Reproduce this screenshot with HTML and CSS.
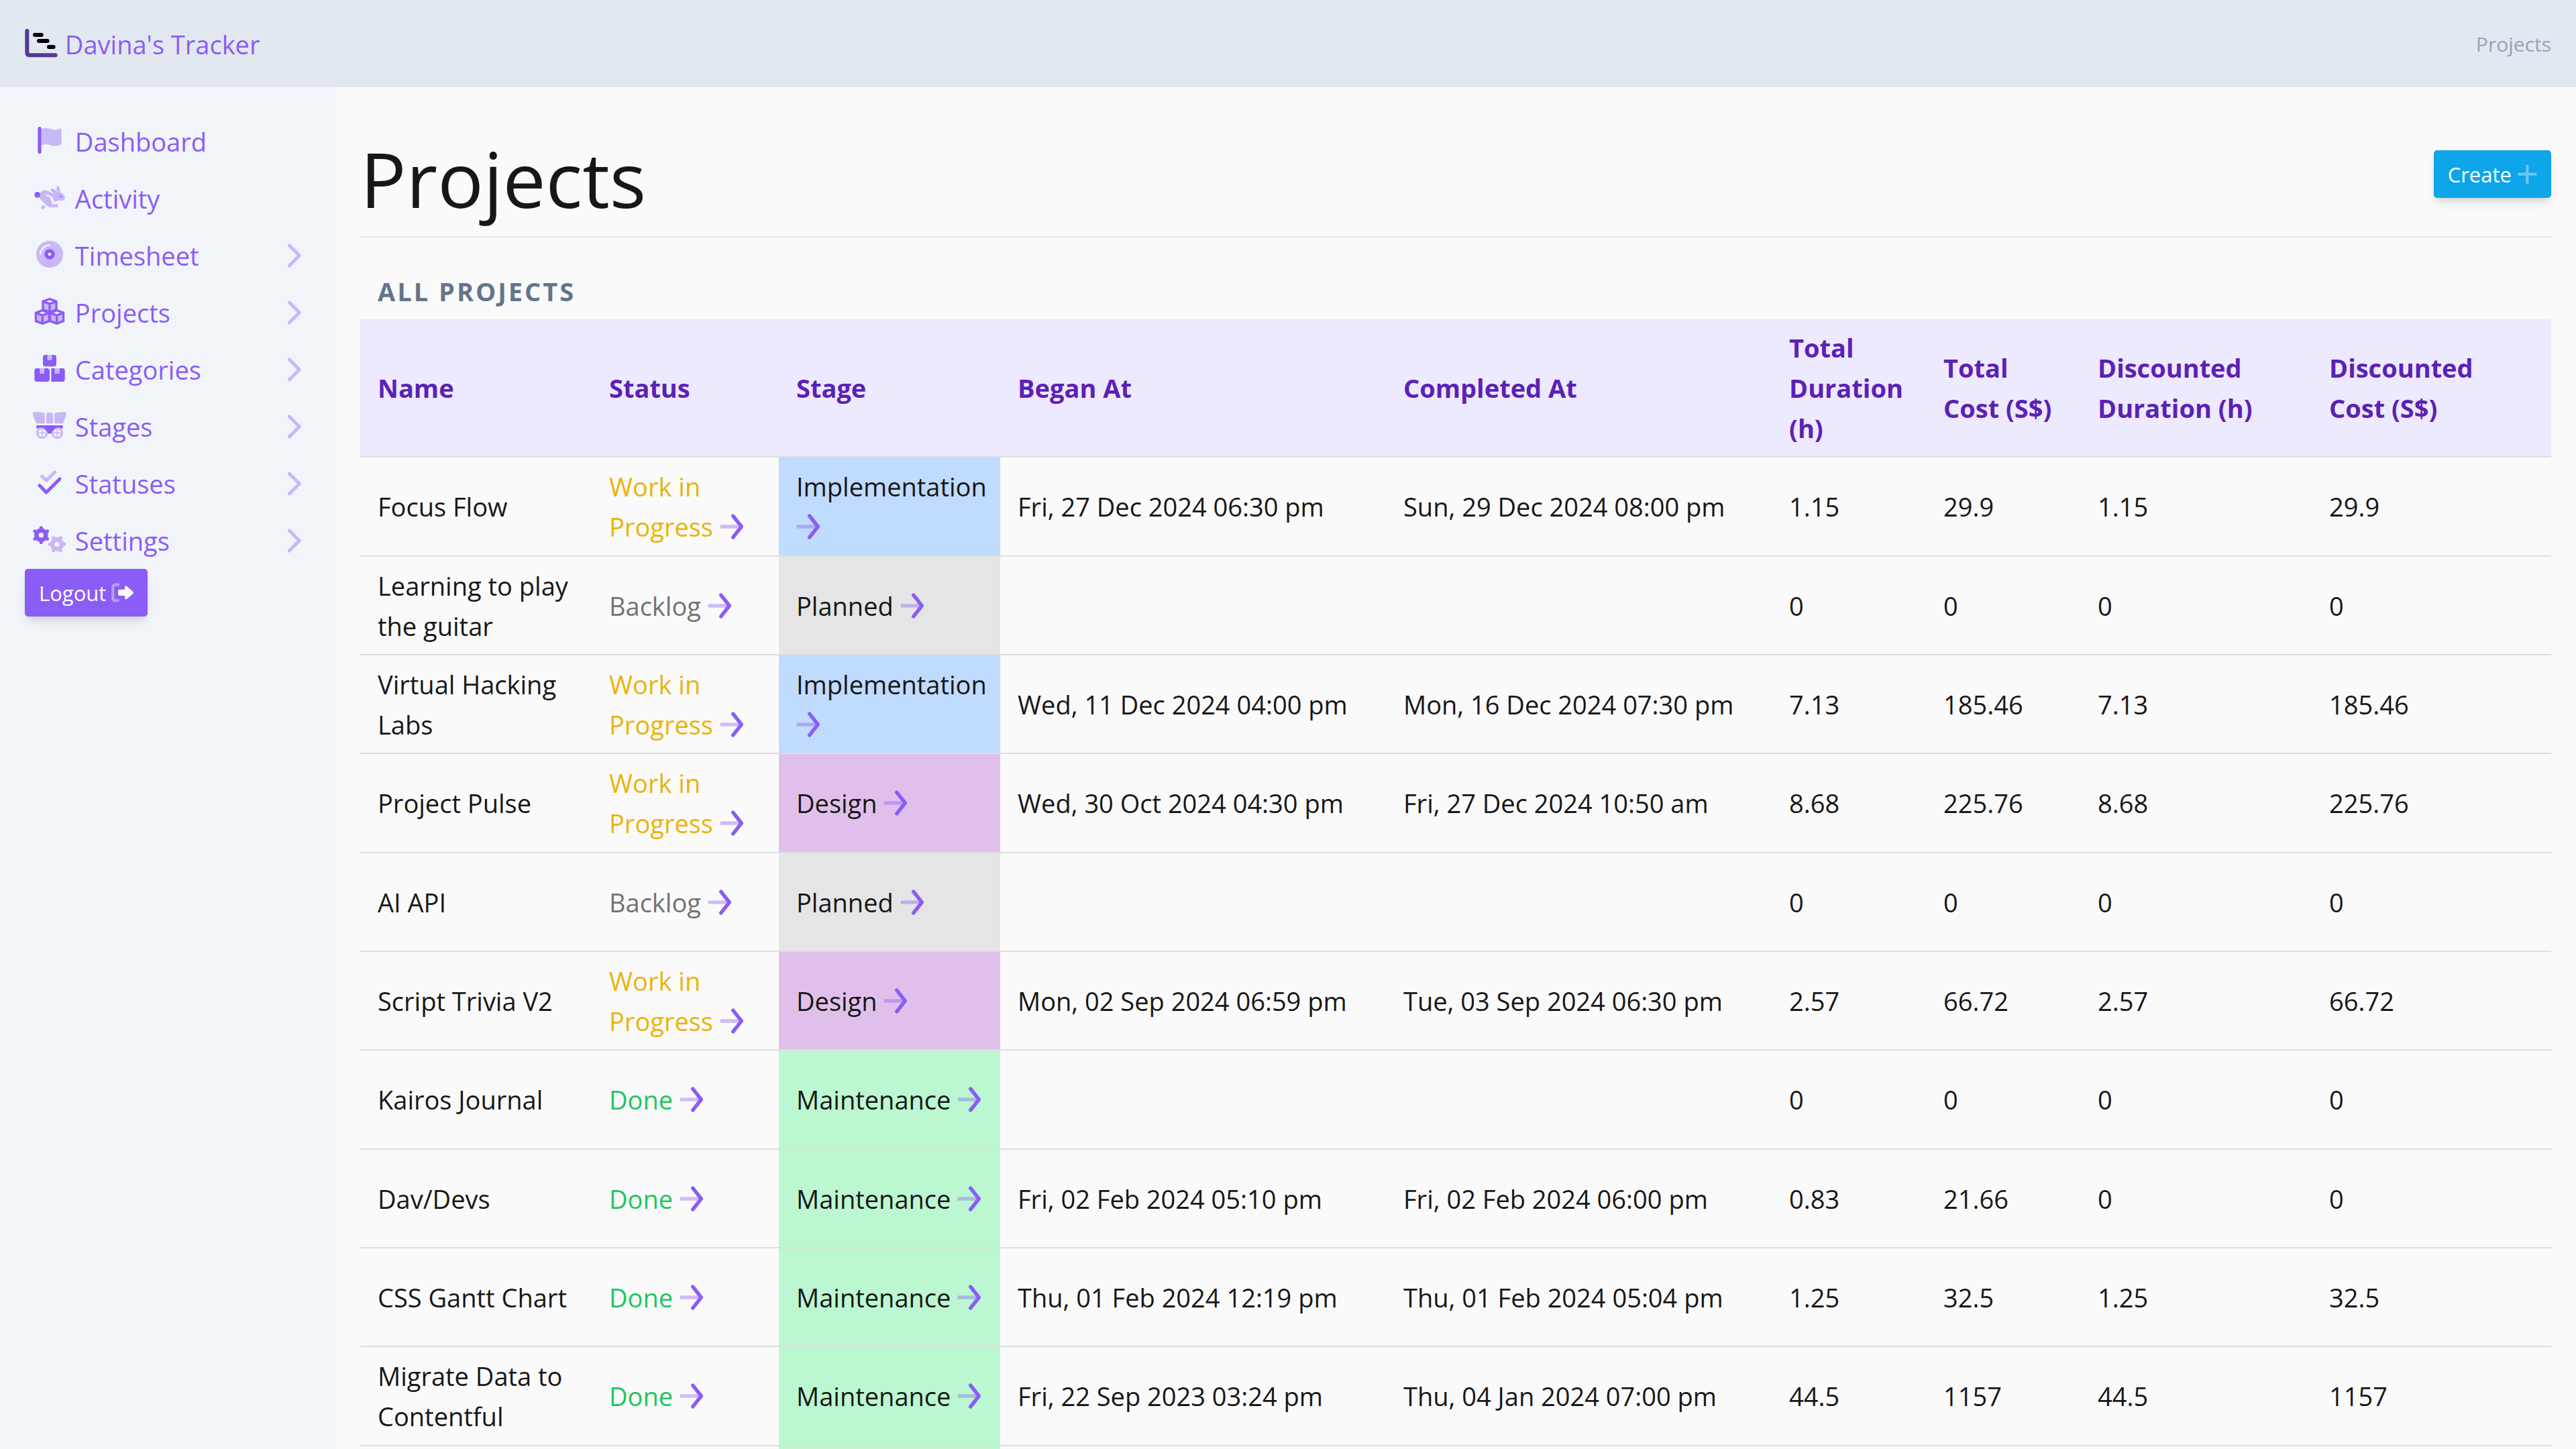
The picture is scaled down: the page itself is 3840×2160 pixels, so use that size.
FILE: index.html
```html
<!DOCTYPE html>
<html lang="en">
<head>
<meta charset="utf-8">
<title>Projects - Davina's Tracker</title>
<link rel="stylesheet" href="styles.css">
</head>
<body>
<svg class="sprite" aria-hidden="true">
  <symbol id="chevron" viewBox="0 0 75 120"><path class="line faded" stroke-width="15" d="M16 15 61 60 16 105"/></symbol>
  <symbol id="arrow" viewBox="0 0 105 120"><path class="line faded" stroke-width="16" stroke-linecap="butt" d="M2 60H86"/><path class="line" stroke-width="16" d="M59 12 97 60 59 108"/></symbol>
  <symbol id="cube" viewBox="-36 -36 72 74"><path class="fill faded" d="M-30-17 0-6V31L-30 20ZM30-17 0-6V31L30 20Z"/><path class="line" stroke-width="10" d="M0-28 30-17V20L0 31-30 20V-17ZM-30-17 0-6 30-17M0-6V31"/></symbol>
  <symbol id="gear" viewBox="-42 -42 84 84"><circle class="line" stroke-width="20" r="21"/><path class="line" stroke-width="15" d="M0-25V-33M0 25V33M22-13 28-17M-22-13-28-17M22 13 28 17M-22 13-28 17"/></symbol>
</svg>

<header class="topbar">
  <a class="brand" href="#"><svg class="logo" viewBox="0 0 150 129"><path class="logo-axis" d="M10 9V106Q10 118 22 118H137"/><path class="logo-bars" d="M45 27H74M63 54H101M108 81H128"/></svg> Davina's Tracker</a>
  <span class="crumb">Projects</span>
</header>

<div class="layout">
  <nav class="sidebar">
    <ul class="menu">
      <li><a href="#"><span><svg class="icon" viewBox="0 0 150 120"><path class="line" stroke-width="16" d="M30 8V112"/><path class="fill faded" d="M38 10C58 3 72 6 84 11C98 16 108 14 119 9Q128 7 128 15V73Q128 78 122 81C104 89 92 88 76 81C62 77 50 78 38 82Z"/></svg> Dashboard</span></a></li>
      <li><a href="#"><span><svg class="icon" viewBox="0 0 150 120"><circle class="fill" cx="20" cy="49" r="13"/><g class="faded"><path class="fill" d="M31 46C35 31 48 27 62 30C74 33 84 42 97 45C90 41 79 34 80 25C81 18 91 21 98 27C104 32 107 36 108 40C104 28 104 12 112 8C120 11 123 28 122 39C134 42 143 52 143 62C142 71 135 75 126 75H113L94 82C96 65 82 50 58 49C56 49 56 54 59 55C80 57 84 75 86 91H107C115 91 114 105 107 105H77C70 105 67 102 62 97L33 70C28 64 28 54 31 46Z"/><path class="fill" d="M46 94 58 104C52 108 46 114 40 113C33 111 36 102 46 94Z"/></g><circle class="fill" cx="124" cy="57" r="4"/></svg> Activity</span></a></li>
      <li><a href="#"><span><svg class="icon" viewBox="0 0 150 120"><circle class="fill faded" cx="75" cy="60" r="60"/><path class="line cut" stroke-width="7" d="M34 60A41 41 0 0 1 75 19"/><circle class="fill" cx="75" cy="60" r="23"/><circle class="hole" cx="75" cy="60" r="7"/></svg> Timesheet</span><svg class="chevron"><use href="#chevron"/></svg></a></li>
      <li><a href="#"><span><svg class="icon" viewBox="0 0 150 120"><use href="#cube" x="39" y="-3" width="72" height="74"/><use href="#cube" x="7" y="48" width="72" height="74"/><use href="#cube" x="71" y="48" width="72" height="74"/></svg> Projects</span><svg class="chevron"><use href="#chevron"/></svg></a></li>
      <li><a href="#"><span><svg class="icon" viewBox="0 0 150 120"><path class="fill" d="M56 0H65V24H85V0H94Q105 0 105 11V40Q105 52 94 52H56Q45 52 45 40V11Q45 0 56 0ZM18 60H31V84H51V60H64Q75 60 75 71V108Q75 120 64 120H18Q7 120 7 108V71Q7 60 18 60ZM82 60H98V84H120V60H132Q143 60 143 71V108Q143 120 132 120H82Z"/><path class="fill faded" d="M65 0H85V24H65ZM31 60H51V84H31ZM98 60H120V84H98Z"/></svg> Categories</span><svg class="chevron"><use href="#chevron"/></svg></a></li>
      <li><a href="#"><span><svg class="icon" viewBox="0 0 150 120"><path class="fill" d="M19 60H131Q135 60 135 67Q135 75 130 75Q110 62 92 80Q84 88 83 97H67Q66 88 58 80Q40 62 20 75Q15 75 15 67Q15 60 19 60Z"/><g class="faded"><path class="fill" d="M10 0 48 3Q53 4 53 9V52H15L0 13Q-1 0 10 0ZM66 4H84Q90 4 90 10V52H60V10Q60 4 66 4ZM140 0 102 3Q97 4 97 9V52H135L150 13Q151 0 140 0Z"/><path class="line" stroke-width="9" d="M19 94A22 22 0 1 0 63 94A22 22 0 1 0 19 94ZM87 94A22 22 0 1 0 131 94A22 22 0 1 0 87 94Z"/><path class="line" stroke-width="5" stroke-linecap="butt" d="M24 94H58M41 77V111M92 94H126M109 77V111"/></g></svg> Stages</span><svg class="chevron"><use href="#chevron"/></svg></a></li>
      <li><a href="#"><span><svg class="icon" viewBox="0 0 150 120"><path class="line faded" stroke-width="15" d="M41 33 60 52 98 15"/><path class="line" stroke-width="15" d="M30 74 60 105 120 45"/></svg> Statuses</span><svg class="chevron"><use href="#chevron"/></svg></a></li>
      <li><a href="#"><span><svg class="icon" viewBox="0 0 150 120"><use href="#gear" x="-5" y="-1" width="84" height="84"/><g class="faded" transform="rotate(30 108 82)"><use href="#gear" x="66" y="40" width="84" height="84"/></g></svg> Settings</span><svg class="chevron"><use href="#chevron"/></svg></a></li>
    </ul>
    <button class="btn btn-logout" type="button">Logout <svg class="btn-icon" viewBox="0 0 99 99"><path class="line faded" stroke-width="13" d="M31 13H20Q7 13 7 26V71Q7 85 20 85H31"/><path class="fill" d="M36 35H60V24Q62 17 69 20L97 45Q101 49 97 54L69 78Q62 81 60 75V63H36Q30 63 30 57V41Q30 35 36 35Z"/></svg></button>
  </nav>

  <main class="content">
    <div class="title-row">
      <h1>Projects</h1>
      <button class="btn btn-create" type="button">Create <svg class="btn-icon" viewBox="0 0 90 99"><path class="line faded" stroke-width="13" d="M9 50H83M46 13V87"/></svg></button>
    </div>
    <table class="projects">
      <caption>All Projects</caption>
      <colgroup><col class="c-name"><col class="c-status"><col class="c-stage"><col class="c-date"><col class="c-date"><col class="c-total"><col class="c-total"><col class="c-disc"><col class="c-last"></colgroup>
      <thead>
        <tr><th scope="col">Name</th><th scope="col">Status</th><th scope="col">Stage</th><th scope="col">Began At</th><th scope="col">Completed At</th><th scope="col">Total Duration (h)</th><th scope="col">Total Cost (S$)</th><th scope="col">Discounted Duration (h)</th><th scope="col">Discounted Cost (S$)</th></tr>
      </thead>
      <tbody>
        <tr><td>Focus Flow</td><td class="wip">Work in Progress <a href="#"><svg class="arrow"><use href="#arrow"/></svg></a></td><td class="implementation">Implementation <a href="#"><svg class="arrow"><use href="#arrow"/></svg></a></td><td>Fri, 27 Dec 2024 06:30 pm</td><td>Sun, 29 Dec 2024 08:00 pm</td><td>1.15</td><td>29.9</td><td>1.15</td><td>29.9</td></tr>
        <tr><td>Learning to play the guitar</td><td class="backlog">Backlog <a href="#"><svg class="arrow"><use href="#arrow"/></svg></a></td><td class="planned">Planned <a href="#"><svg class="arrow"><use href="#arrow"/></svg></a></td><td></td><td></td><td>0</td><td>0</td><td>0</td><td>0</td></tr>
        <tr><td>Virtual Hacking Labs</td><td class="wip">Work in Progress <a href="#"><svg class="arrow"><use href="#arrow"/></svg></a></td><td class="implementation">Implementation <a href="#"><svg class="arrow"><use href="#arrow"/></svg></a></td><td>Wed, 11 Dec 2024 04:00 pm</td><td>Mon, 16 Dec 2024 07:30 pm</td><td>7.13</td><td>185.46</td><td>7.13</td><td>185.46</td></tr>
        <tr><td>Project Pulse</td><td class="wip">Work in Progress <a href="#"><svg class="arrow"><use href="#arrow"/></svg></a></td><td class="design">Design <a href="#"><svg class="arrow"><use href="#arrow"/></svg></a></td><td>Wed, 30 Oct 2024 04:30 pm</td><td>Fri, 27 Dec 2024 10:50 am</td><td>8.68</td><td>225.76</td><td>8.68</td><td>225.76</td></tr>
        <tr><td>AI API</td><td class="backlog">Backlog <a href="#"><svg class="arrow"><use href="#arrow"/></svg></a></td><td class="planned">Planned <a href="#"><svg class="arrow"><use href="#arrow"/></svg></a></td><td></td><td></td><td>0</td><td>0</td><td>0</td><td>0</td></tr>
        <tr><td>Script Trivia V2</td><td class="wip">Work in Progress <a href="#"><svg class="arrow"><use href="#arrow"/></svg></a></td><td class="design">Design <a href="#"><svg class="arrow"><use href="#arrow"/></svg></a></td><td>Mon, 02 Sep 2024 06:59 pm</td><td>Tue, 03 Sep 2024 06:30 pm</td><td>2.57</td><td>66.72</td><td>2.57</td><td>66.72</td></tr>
        <tr><td>Kairos Journal</td><td class="done">Done <a href="#"><svg class="arrow"><use href="#arrow"/></svg></a></td><td class="maintenance">Maintenance <a href="#"><svg class="arrow"><use href="#arrow"/></svg></a></td><td></td><td></td><td>0</td><td>0</td><td>0</td><td>0</td></tr>
        <tr><td>Dav/Devs</td><td class="done">Done <a href="#"><svg class="arrow"><use href="#arrow"/></svg></a></td><td class="maintenance">Maintenance <a href="#"><svg class="arrow"><use href="#arrow"/></svg></a></td><td>Fri, 02 Feb 2024 05:10 pm</td><td>Fri, 02 Feb 2024 06:00 pm</td><td>0.83</td><td>21.66</td><td>0</td><td>0</td></tr>
        <tr><td>CSS Gantt Chart</td><td class="done">Done <a href="#"><svg class="arrow"><use href="#arrow"/></svg></a></td><td class="maintenance">Maintenance <a href="#"><svg class="arrow"><use href="#arrow"/></svg></a></td><td>Thu, 01 Feb 2024 12:19 pm</td><td>Thu, 01 Feb 2024 05:04 pm</td><td>1.25</td><td>32.5</td><td>1.25</td><td>32.5</td></tr>
        <tr><td>Migrate Data to Contentful</td><td class="done">Done <a href="#"><svg class="arrow"><use href="#arrow"/></svg></a></td><td class="maintenance">Maintenance <a href="#"><svg class="arrow"><use href="#arrow"/></svg></a></td><td>Fri, 22 Sep 2023 03:24 pm</td><td>Thu, 04 Jan 2024 07:00 pm</td><td>44.5</td><td>1157</td><td>44.5</td><td>1157</td></tr>
        <tr><td></td><td></td><td class="maintenance"></td><td></td><td></td><td></td><td></td><td></td><td></td></tr>
      </tbody>
    </table>
  </main>
</div>
</body>
</html>
```
FILE: styles.css
```css
* { box-sizing: border-box; }

body {
  margin: 0;
  height: 100vh;
  overflow: hidden;
  display: flex;
  flex-direction: column;
  background: #fafafa;
  color: #171717;
  font-family: "Segoe UI", "Open Sans", "Noto Sans", sans-serif;
  font-size: 38px;
  line-height: 60px;
}

a { color: inherit; text-decoration: none; }

/* Icon parts: two-tone, the second tone is faded */
.sprite { position: absolute; width: 0; height: 0; }
.fill { fill: #8b5cf6; }
.line { fill: none; stroke: #8b5cf6; stroke-linecap: round; stroke-linejoin: round; }
.line[stroke-linecap="butt"] { stroke-linecap: butt; }
.faded { opacity: .4; }
.line.cut { stroke: #f1f5f9; }
.hole { fill: #f1f5f9; }

.topbar {
  flex: none;
  display: flex;
  justify-content: space-between;
  align-items: center;
  height: 130px;
  padding: 2px 37px 0;
  background: #e2e8f0;
}
.brand { color: #8b5cf6; }
.logo { width: 50px; height: 43px; vertical-align: -5px; }
.logo-axis, .logo-bars { fill: none; stroke-width: 18px; stroke-linecap: round; }
.logo-axis { stroke: #553896; }
.logo-bars { stroke: #000; }
.crumb { color: #94a3b8; font-size: 30px; }

.layout { flex: 1; min-height: 0; display: flex; }

.sidebar {
  flex: none;
  width: 500px;
  padding: 38px 37px;
  background: #f1f5f9;
}
.menu { list-style: none; margin: 0; padding: 0; }
.menu a {
  display: flex;
  justify-content: space-between;
  align-items: center;
  height: 85px;
  padding: 0 12px;
  color: #8b5cf6;
}
.icon { width: 50px; height: 40px; margin-right: 3px; vertical-align: -3px; overflow: visible; }
.chevron { width: 25px; height: 40px; }

.btn {
  height: 71px;
  padding: 0 21px;
  border: 0;
  border-radius: 5px;
  color: #fff;
  font: inherit;
  font-size: 31px;
  white-space: nowrap;
  box-shadow: 0 10px 15px -3px rgb(0 0 0 / .1), 0 5px 10px -4px rgb(0 0 0 / .1);
}
.btn .fill { fill: #fafafa; }
.btn .line { stroke: #fafafa; }
.btn-icon { height: 33px; vertical-align: -4px; }
.btn-logout { background: #8b5cf6; }
.btn-create { background: #0ea5e9; }

.content { flex: 1; min-width: 0; padding: 37px; }
.title-row {
  display: flex;
  justify-content: space-between;
  align-items: center;
  margin-bottom: 38px;
  border-bottom: 2px solid #e2e8f0;
}
h1 {
  margin: 0;
  padding-top: 12px;
  font-size: 114px;
  font-weight: 400;
  line-height: 173px;
}

.projects {
  width: 100%;
  table-layout: fixed;
  border-collapse: separate;
  border-spacing: 0;
}
.projects caption {
  padding: 12px 26px;
  color: #64748b;
  font-weight: 700;
  letter-spacing: 3px;
  text-align: left;
  text-transform: uppercase;
}
.c-name { width: 345px; }
.c-status { width: 279px; }
.c-stage { width: 330px; }
.c-date { width: 575px; }
.c-total { width: 230px; }
.c-disc { width: 345px; }
.c-last { width: 357px; }

th, td {
  padding: 12px 24px 12px 26px;
  border-bottom: 2px solid #dedee0;
  text-align: left;
  vertical-align: middle;
}
th { background: #ede9fe; color: #5b21b6; font-weight: 700; }
td { height: 147px; }
tr:nth-child(3n+1) td { height: 148px; }

.arrow { width: 35px; height: 40px; vertical-align: -5px; }
.wip { color: #eab308; }
.backlog { color: #737373; }
.done { color: #22c55e; }
.implementation { background: #bfdbfe; }
.planned { background: #e5e5e5; }
.design { background: #e0c0eb; }
.maintenance { background: #bbf7d0; }
```
